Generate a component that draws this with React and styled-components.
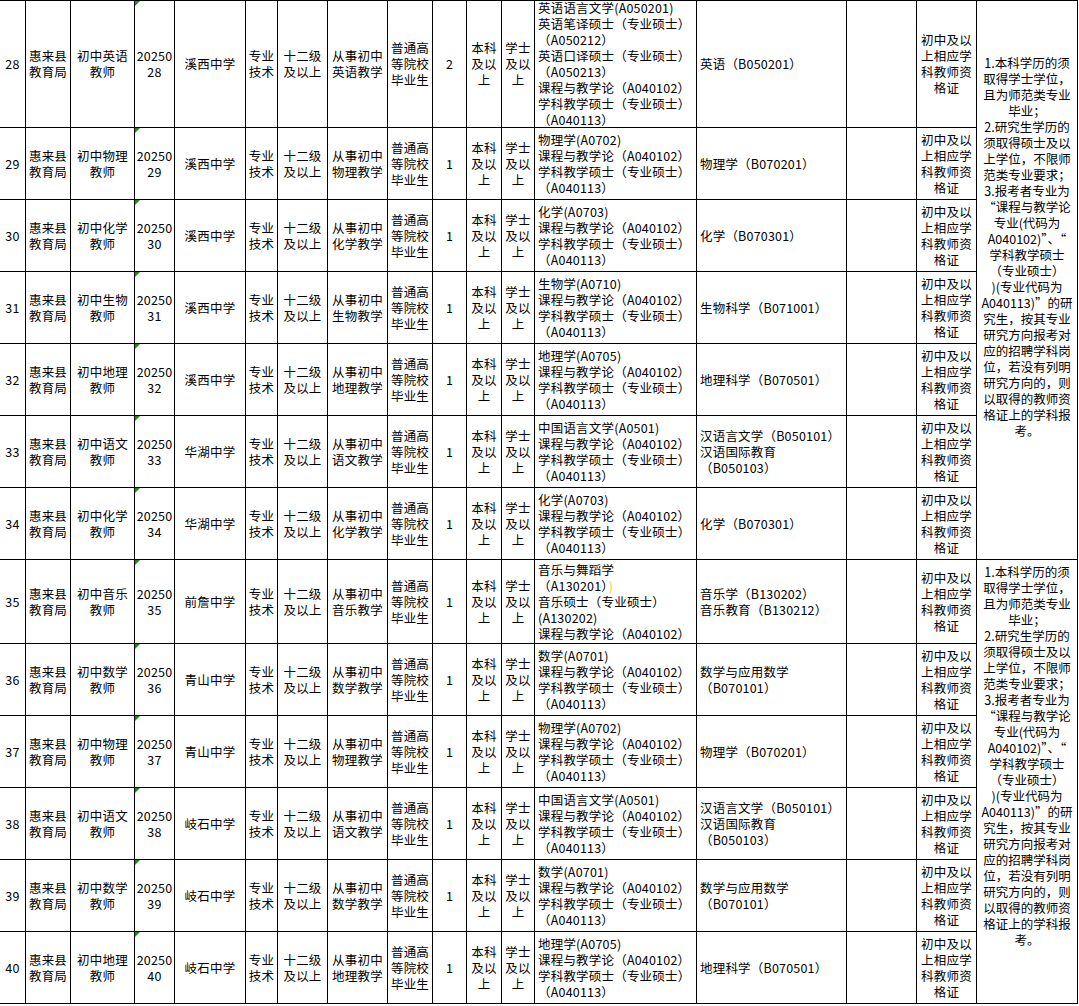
import React from 'react';
import styled, { createGlobalStyle } from 'styled-components';

const Global = createGlobalStyle`
  html, body {
    margin: 0;
    padding: 0;
    background: #fff;
  }
  body {
    font-family: "Noto Sans CJK SC", "Noto Sans", sans-serif;
    color: #000;
  }
`;

const widths = [26, 45, 64, 40, 71, 32, 50, 60, 45, 34, 35, 33, 162, 150, 70, 60, 101];

const Sheet = styled.div`
  display: grid;
  grid-template-columns: ${widths.map((w) => `${w}px`).join(' ')};
  grid-template-rows: ${(p) => p.$rows.map((h) => `${h}px`).join(' ')};
  width: 1078px;
  border-top: 1px solid #000;
  font-size: 12.5px;
  line-height: 16px;
`;

const Cell = styled.div`
  position: relative;
  box-sizing: border-box;
  border-right: 1px solid #000;
  border-bottom: 1px solid #000;
  display: flex;
  flex-direction: column;
  justify-content: center;
  align-items: ${(p) => (p.$left ? 'flex-start' : 'center')};
  text-align: ${(p) => (p.$left ? 'left' : 'center')};
  padding: ${(p) => (p.$left ? '0 0 0 3px' : '0')};
  white-space: pre-line;
  letter-spacing: 0.2px;
`;

// excel comment marker in the corner of the code column
const CodeCell = styled(Cell)`
  &::before {
    content: "";
    position: absolute;
    top: 0;
    left: 0;
    border-top: 5px solid #1f8a1f;
    border-right: 5px solid transparent;
  }
`;

const NoteCell = styled(Cell)`
  grid-column: 17;
  grid-row: ${(p) => p.$start} / span ${(p) => p.$span};
  justify-content: flex-start;
  padding-top: ${(p) => p.$top}px;
  letter-spacing: 0;
`;

const Mark = styled.span`
  color: #e8cf2a;
  margin-left: 1px;
`;

const tail = '课程与教学论（A040102）\n学科教学硕士（专业硕士）\n（A040113）';

const rows = [
  { no: 28, subj: '英语', school: '溪西中学', n: 2, h: 127,
    major: '英语语言文学(A050201)\n英语笔译硕士（专业硕士）\n（A050212）\n英语口译硕士（专业硕士）\n（A050213）\n' + tail,
    bach: '英语（B050201）' },
  { no: 29, subj: '物理', school: '溪西中学', major: '物理学(A0702)\n' + tail, bach: '物理学（B070201）' },
  { no: 30, subj: '化学', school: '溪西中学', major: '化学(A0703)\n' + tail, bach: '化学（B070301）' },
  { no: 31, subj: '生物', school: '溪西中学', major: '生物学(A0710)\n' + tail, bach: '生物科学（B071001）' },
  { no: 32, subj: '地理', school: '溪西中学', major: '地理学(A0705)\n' + tail, bach: '地理科学（B070501）' },
  { no: 33, subj: '语文', school: '华湖中学', major: '中国语言文学(A0501)\n' + tail,
    bach: '汉语言文学（B050101）\n汉语国际教育\n（B050103）' },
  { no: 34, subj: '化学', school: '华湖中学', major: '化学(A0703)\n' + tail, bach: '化学（B070301）' },
  { no: 35, subj: '音乐', school: '前詹中学', h: 84,
    major: (
      <span>
        {'音乐与舞蹈学\n（A130201）'}
        <Mark>)</Mark>
        {'\n音乐硕士（专业硕士）\n(A130202)\n课程与教学论（A040102）'}
      </span>
    ),
    bach: '音乐学（B130202）\n音乐教育（B130212）' },
  { no: 36, subj: '数学', school: '青山中学', major: '数学(A0701)\n' + tail, bach: '数学与应用数学\n（B070101）' },
  { no: 37, subj: '物理', school: '青山中学', major: '物理学(A0702)\n' + tail, bach: '物理学（B070201）' },
  { no: 38, subj: '语文', school: '岐石中学', major: '中国语言文学(A0501)\n' + tail,
    bach: '汉语言文学（B050101）\n汉语国际教育\n（B050103）' },
  { no: 39, subj: '数学', school: '岐石中学', major: '数学(A0701)\n' + tail, bach: '数学与应用数学\n（B070101）' },
  { no: 40, subj: '地理', school: '岐石中学', major: '地理学(A0705)\n' + tail, bach: '地理科学（B070501）' },
];

const note = [
  '1.本科学历的须', '取得学士学位，', '且为师范类专业', '毕业；',
  '2.研究生学历的', '须取得硕士及以', '上学位，不限师', '范类专业要求；',
  '3.报考者专业为', '“课程与教学论', '专业(代码为', 'A040102)”、“',
  '学科教学硕士', '（专业硕士）', ')(专业代码为', 'A040113)”的研',
  '究生，按其专业', '研究方向报考对', '应的招聘学科岗', '位，若没有列明',
  '研究方向的，则', '以取得的教师资', '格证上的学科报', '考。',
].join('\n');

const Row = ({ r }) => (
  <>
    <Cell>{r.no}</Cell>
    <Cell>{'惠来县\n教育局'}</Cell>
    <Cell>{`初中${r.subj}\n教师`}</Cell>
    <CodeCell>{`20250\n${r.no}`}</CodeCell>
    <Cell>{r.school}</Cell>
    <Cell>{'专业\n技术'}</Cell>
    <Cell>{'十二级\n及以上'}</Cell>
    <Cell>{`从事初中\n${r.subj}教学`}</Cell>
    <Cell>{'普通高\n等院校\n毕业生'}</Cell>
    <Cell>{r.n || 1}</Cell>
    <Cell>{'本科\n及以\n上'}</Cell>
    <Cell>{'学士\n及以\n上'}</Cell>
    <Cell $left>{r.major}</Cell>
    <Cell $left>{r.bach}</Cell>
    <Cell />
    <Cell>{'初中及以\n上相应学\n科教师资\n格证'}</Cell>
  </>
);

export default function App() {
  const heights = rows.map((r) => r.h || 72);
  return (
    <>
      <Global />
      <Sheet $rows={heights}>
        {rows.map((r) => (
          <Row key={r.no} r={r} />
        ))}
        <NoteCell $start={1} $span={7} $top={54}>{note}</NoteCell>
        <NoteCell $start={8} $span={6} $top={4}>{note}</NoteCell>
      </Sheet>
    </>
  );
}
